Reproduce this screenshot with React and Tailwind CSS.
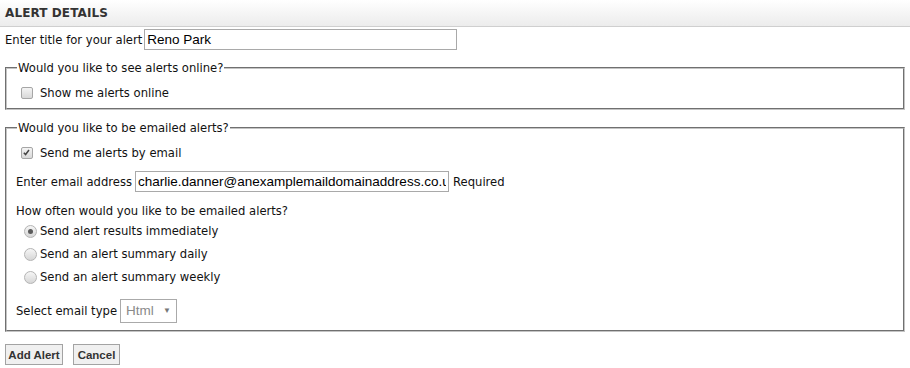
import { useState } from "react";

function Check({ checked }) {
  return (
    <span className="relative inline-block w-[12px] h-[12px] rounded-[2px] border border-[#a6a6a6] bg-gradient-to-b from-[#f4f4f4] to-[#d8d8d8]">
      {checked && (
        <svg viewBox="0 0 12 12" className="absolute inset-0 w-[10px] h-[10px]">
          <path d="M2.2 5.6 L4.3 7.8 L8.4 2.4" fill="none" stroke="#444" strokeWidth="1.8" />
        </svg>
      )}
    </span>
  );
}

function Radio({ checked }) {
  return (
    <span className="relative inline-flex items-center justify-center w-[13px] h-[13px] rounded-full border border-[#b4b4b4] bg-gradient-to-b from-[#f6f6f6] to-[#d6d6d6]">
      {checked && <span className="w-[5px] h-[5px] rounded-full bg-[#5a5a5a]" />}
    </span>
  );
}

const txt = "font-['DejaVu_Sans',sans-serif] text-[11.6px] leading-[16px] text-[#111]";
const inputCls =
  "h-[21px] border border-[#a9a9a9] px-[2px] font-['Liberation_Sans',Arial,sans-serif] text-[13.5px] text-black outline-none";
const fieldset = "mx-[5px] mt-[10px] border-2 [border-style:groove] border-[#c4c4c4]";

export default function App() {
  const [freq] = useState("now");

  return (
    <div className={"w-[910px] h-[368px] bg-white " + txt}>
      <div className="h-[27px] border-b border-[#cfcfcf] bg-gradient-to-b from-white to-[#ececec] px-[5px] flex items-center">
        <span className="font-bold text-[12px] text-[#333] tracking-[0.1px]">ALERT DETAILS</span>
      </div>

      <div className="flex items-center mt-[2px] pl-[5px] gap-[2px]">
        <span>Enter title for your alert</span>
        <input className={inputCls + " w-[313px]"} defaultValue="Reno Park" />
      </div>

      <fieldset className={fieldset + " px-[14px] pb-[7px]"}>
        <legend className="px-[1px] -ml-[4px]">Would you like to see alerts online?</legend>
        <label className="flex items-center gap-[7px] mt-[9px] h-[16px]">
          <Check checked={false} />
          <span>Show me alerts online</span>
        </label>
      </fieldset>

      <fieldset className={fieldset + " px-[9px] pb-[7px]"}>
        <legend className="px-[1px] ml-[1px]">Would you like to be emailed alerts?</legend>
        <label className="flex items-center gap-[7px] mt-[9px] h-[16px] pl-[5px]">
          <Check checked={true} />
          <span>Send me alerts by email</span>
        </label>

        <div className="flex items-center gap-[3px] mt-[10px] h-[21px]">
          <span>Enter email address</span>
          <input
            className={inputCls + " w-[314px]"}
            defaultValue="charlie.danner@anexamplemaildomainaddress.co.uk"
          />
          <span className="ml-[1px]">Required</span>
        </div>

        <div className="mt-[11px] h-[16px]">How often would you like to be emailed alerts?</div>

        <div className="flex flex-col gap-[7px] mt-[4px] pl-[8px]">
          {[
            ["now", "Send alert results immediately"],
            ["daily", "Send an alert summary daily"],
            ["weekly", "Send an alert summary weekly"],
          ].map(([k, t]) => (
            <label key={k} className="flex items-center gap-[3px] h-[16px]">
              <Radio checked={freq === k} />
              <span>{t}</span>
            </label>
          ))}
        </div>

        <div className="flex items-center gap-[3px] mt-[14px]">
          <span>Select email type</span>
          <div className="w-[57px] h-[24px] border border-[#aaa] flex items-center justify-between px-[5px] font-['Liberation_Sans',Arial,sans-serif] text-[13.5px] text-[#8a8a8a]">
            <span>Html</span>
            <span className="text-[8px] text-[#777]">▼</span>
          </div>
        </div>
      </fieldset>

      <div className="flex gap-[10px] mt-[12px] pl-[5px]">
        <button className="h-[21px] w-[58px] border border-[#a3a3a3] bg-[#f0f0f0] font-['Liberation_Sans',Arial,sans-serif] font-bold text-[11.5px] text-[#333]">
          Add Alert
        </button>
        <button className="h-[21px] w-[47px] border border-[#a3a3a3] bg-[#f0f0f0] font-['Liberation_Sans',Arial,sans-serif] font-bold text-[11.5px] text-[#333]">
          Cancel
        </button>
      </div>
    </div>
  );
}
